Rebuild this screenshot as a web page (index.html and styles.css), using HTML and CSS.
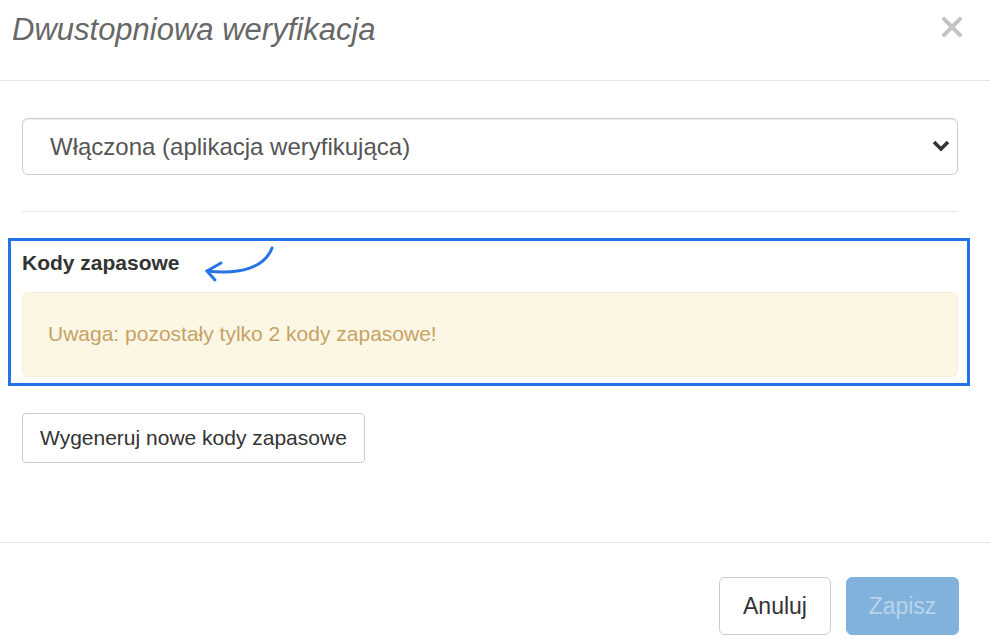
FILE: index.html
```html
<!DOCTYPE html>
<html lang="pl">
<head>
    <meta charset="UTF-8">
    <meta name="viewport" content="width=device-width, initial-scale=1.0">
    <title>Dwustopniowa weryfikacja</title>
    <link rel="stylesheet" href="styles.css">
</head>
<body>

    <!-- Modal -->
    <div class="modal">

        <!-- Header -->
        <div class="modal-header">
            <h4 class="modal-title">Dwustopniowa weryfikacja</h4>
            <button type="button" class="close" aria-label="Zamknij">
                <svg width="20" height="20" viewBox="0 0 20 20">
                    <path d="M2 2 L18 18 M18 2 L2 18" stroke="#c4c4c4" stroke-width="4" stroke-linecap="round"/>
                </svg>
            </button>
        </div>

        <!-- Body -->
        <div class="modal-body">
            <div class="select-wrap">
                <select class="form-control" name="two_factor">
                    <option value="app">Włączona (aplikacja weryfikująca)</option>
                    <option value="off">Wyłączona</option>
                </select>
                <svg class="chevron" width="18" height="12" viewBox="0 0 18 12">
                    <path d="M2 2 L9 9 L16 2" fill="none" stroke="#333" stroke-width="3.5"/>
                </svg>
            </div>

            <hr>

            <!-- Backup codes (highlighted) -->
            <div class="highlight">
                <svg class="arrow" width="80" height="40" viewBox="0 0 80 40">
                    <path d="M73 5 C66 24 42 32 8 28" fill="none" stroke="#2673e8" stroke-width="3" stroke-linecap="round"/>
                    <path d="M22 20 L8 28 L16 37" fill="none" stroke="#2673e8" stroke-width="3" stroke-linecap="round" stroke-linejoin="round"/>
                </svg>
                <label class="section-label">Kody zapasowe</label>
                <div class="alert alert-warning">Uwaga: pozostały tylko 2 kody zapasowe!</div>
            </div>

            <button type="button" class="btn btn-default btn-generate">Wygeneruj nowe kody zapasowe</button>
        </div>

        <!-- Footer -->
        <div class="modal-footer">
            <button type="button" class="btn btn-default btn-footer">Anuluj</button>
            <button type="button" class="btn btn-primary btn-footer" disabled>Zapisz</button>
        </div>
    </div>

</body>
</html>
```

FILE: styles.css
```css
/* Reset */
body, h4, hr {
    margin: 0;
    padding: 0;
}

* {
    box-sizing: border-box;
}

body {
    font-family: "Liberation Sans", Arial, sans-serif;
    font-size: 21px;
    color: #333;
    background-color: #fff;
}

/* Header */
.modal-header {
    display: flex;
    justify-content: space-between;
    align-items: flex-start;
    height: 81px;
    padding: 12px 28px 0 12px;
    border-bottom: 1px solid #e5e5e5;
}

.modal-title {
    font-size: 31px;
    font-weight: normal;
    font-style: italic;
    line-height: 36px;
    color: #676767;
}

.close {
    margin-top: 5px;
    padding: 0;
    border: none;
    background: none;
    line-height: 0;
    cursor: pointer;
}

/* Body */
.modal-body {
    padding: 37px 32px 79px 22px;
}

.select-wrap {
    position: relative;
}

.form-control {
    display: block;
    width: 100%;
    height: 57px;
    padding: 0 40px 0 27px;
    font-family: inherit;
    font-size: 24px;
    color: #555;
    background-color: #fff;
    border: 1px solid #ccc;
    border-radius: 6px;
    box-shadow: inset 0 1px 1px rgba(0, 0, 0, 0.075);
    appearance: none;
    -webkit-appearance: none;
}

.chevron {
    position: absolute;
    right: 8px;
    top: 22px;
    pointer-events: none;
}

hr {
    margin-top: 36px;
    border: none;
    border-top: 1px solid #e5e5e5;
}

/* Highlighted section */
.highlight {
    position: relative;
    margin: 26px -12px 0 -14px;
    padding: 9px 9px 6px 11px;
    border: 3px solid #2673e8;
}

.arrow {
    position: absolute;
    left: 188px;
    top: 2px;
}

.section-label {
    display: block;
    font-size: 21px;
    font-weight: bold;
    line-height: 25px;
    color: #333;
}

.alert {
    margin-top: 17px;
    padding: 28px 25px 30px;
    line-height: 25px;
    border: 1px solid #faefd6;
    border-radius: 6px;
}

.alert-warning {
    background-color: #fcf6e4;
    color: #c6a366;
}

/* Buttons */
.btn {
    font-family: inherit;
    border: 1px solid #ccc;
    border-radius: 4px;
    background-color: #fff;
    color: #333;
    cursor: pointer;
}

.btn-generate {
    display: block;
    margin-top: 27px;
    height: 50px;
    padding: 0 17px;
    font-size: 21px;
}

/* Footer */
.modal-footer {
    display: flex;
    justify-content: flex-end;
    gap: 15px;
    padding: 34px 31px 0 0;
    border-top: 1px solid #e5e5e5;
}

.btn-footer {
    height: 58px;
    width: 112px;
    padding: 0;
    font-size: 23px;
    border-radius: 6px;
}

.btn-primary {
    width: 113px;
    background-color: #80b2dc;
    border-color: #80b2dc;
    color: #b9d3eb;
    cursor: not-allowed;
}
```
